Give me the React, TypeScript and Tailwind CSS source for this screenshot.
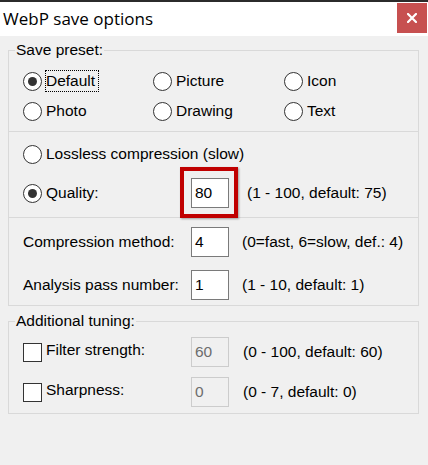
import React from "react";

const font = { fontFamily: '"Liberation Sans", Arial, sans-serif' };

function Radio({ checked }: { checked?: boolean }) {
  return (
    <div className="w-[19px] h-[19px] shrink-0 rounded-full border border-[#333333] bg-white flex items-center justify-center">
      {checked && <div className="w-[9px] h-[9px] rounded-full bg-[#333333]" />}
    </div>
  );
}

function Check() {
  return <div className="w-[19px] h-[19px] shrink-0 border border-[#333333] bg-white" />;
}

function Box({ value, disabled }: { value: string; disabled?: boolean }) {
  return (
    <div
      className={
        "w-[38px] h-[30px] shrink-0 border pl-[3px] pt-[5px] leading-[18px] " +
        (disabled
          ? "border-[#cccccc] bg-[#f0f0f0] text-[#6d6d6d]"
          : "border-[#7a7a7a] bg-white text-black")
      }
    >
      {value}
    </div>
  );
}

function RadioItem({ label, checked, focus }: { label: string; checked?: boolean; focus?: boolean }) {
  return (
    <div className="flex items-center h-[30px]">
      <Radio checked={checked} />
      {focus ? (
        <span className="ml-[3px] border border-dotted border-black leading-[20px] pr-[3px]">{label}</span>
      ) : (
        <span className="ml-[4px]">{label}</span>
      )}
    </div>
  );
}

export default function App() {
  return (
    <div className="w-[428px] h-[465px] bg-[#f0f0f0] text-[15.5px] text-black overflow-hidden" style={font}>
      {/* Title bar */}
      <div className="border-t-2 border-[#2b2b2b] bg-white h-[36px] flex items-start justify-between">
        <div
          className="h-[34px] flex items-center pl-[3px] text-[17px] text-black"
          style={{ fontFamily: '"Open Sans", "Noto Sans", sans-serif' }}
        >
          WebP save options
        </div>
        <div className="mt-[1px] mr-[1px] w-[30px] h-[30px] bg-[#c75050] flex items-center justify-center">
          <svg width="10" height="10" viewBox="0 0 10 10">
            <path d="M1 1 L9 9 M9 1 L1 9" stroke="white" strokeWidth="2.2" strokeLinecap="square" />
          </svg>
        </div>
      </div>

      {/* Save preset group */}
      <fieldset className="ml-[8px] mt-[5px] w-[411px] min-w-0 border border-[#d9d9d9]">
        <legend className="ml-[6px] px-[1px] leading-[18px]">Save preset:</legend>

        <div className="pt-[7px] pb-[5px] pl-[14px] border-b border-[#d9d9d9]">
          <div className="grid grid-cols-[130px_131px_1fr]">
            <RadioItem label="Default" checked focus />
            <RadioItem label="Picture" />
            <RadioItem label="Icon" />
            <RadioItem label="Photo" />
            <RadioItem label="Drawing" />
            <RadioItem label="Text" />
          </div>
        </div>

        <div className="pt-[7px] pb-[9px] pl-[14px] border-b border-[#d9d9d9] flex flex-col gap-[9px]">
          <RadioItem label="Lossless compression (slow)" />
          <div className="flex items-center h-[30px]">
            <div className="w-[168px] flex items-center">
              <Radio checked />
              <span className="ml-[4px]">Quality:</span>
            </div>
            <div className="relative">
              <Box value="80" />
              <div className="absolute -left-[11px] -right-[9px] -top-[11px] -bottom-[10px] border-[4px] border-[#c00000] shadow-[1px_1px_2px_rgba(0,0,0,0.35)]" />
            </div>
            <span className="ml-[18px]">(1 - 100, default: 75)</span>
          </div>
        </div>

        <div className="pt-[9px] pb-[5px] pl-[14px] flex flex-col gap-[13px]">
          <div className="flex items-center h-[30px]">
            <span className="w-[168px]">Compression method:</span>
            <Box value="4" />
            <span className="ml-[13px]">(0=fast, 6=slow, def.: 4)</span>
          </div>
          <div className="flex items-center h-[30px]">
            <span className="w-[168px]">Analysis pass number:</span>
            <Box value="1" />
            <span className="ml-[13px]">(1 - 10, default: 1)</span>
          </div>
        </div>
      </fieldset>

      {/* Additional tuning group */}
      <fieldset className="ml-[8px] mt-[6px] w-[411px] min-w-0 border border-[#d9d9d9]">
        <legend className="ml-[6px] px-[1px] leading-[18px]">Additional tuning:</legend>
        <div className="pt-[7px] pb-[6px] pl-[14px] flex flex-col gap-[10px]">
          <div className="flex items-center h-[30px]">
            <div className="w-[168px] flex items-center">
              <Check />
              <span className="ml-[4px] mb-[4px]">Filter strength:</span>
            </div>
            <Box value="60" disabled />
            <span className="ml-[14px]">(0 - 100, default: 60)</span>
          </div>
          <div className="flex items-center h-[30px]">
            <div className="w-[168px] flex items-center">
              <Check />
              <span className="ml-[4px] mb-[4px]">Sharpness:</span>
            </div>
            <Box value="0" disabled />
            <span className="ml-[14px]">(0 - 7, default: 0)</span>
          </div>
        </div>
      </fieldset>
    </div>
  );
}
